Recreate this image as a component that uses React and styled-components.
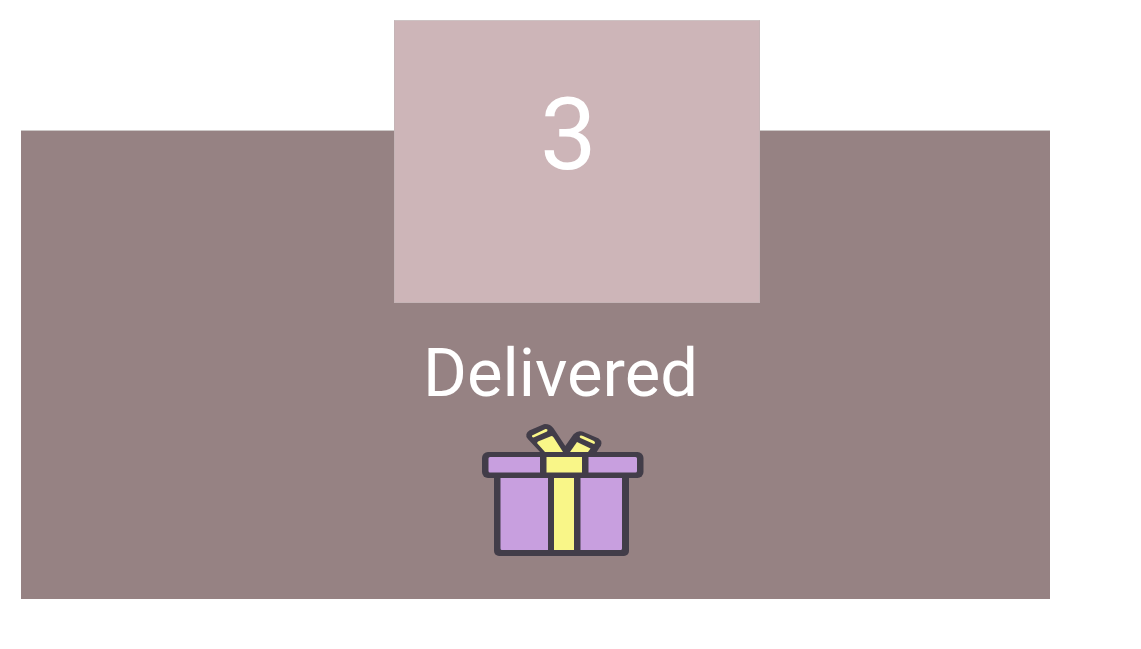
import React from "react";
import styled, { createGlobalStyle } from "styled-components";

const GlobalStyle = createGlobalStyle`
  body {
    margin: 0;
    background: #fff;
    font-family: Roboto, "Liberation Sans", sans-serif;
  }
`;

const Page = styled.main`
  box-sizing: border-box;
  padding: 20px 91px 50px 21px;
`;

const Panel = styled.section`
  box-sizing: border-box;
  display: flex;
  flex-direction: column;
  align-items: center;
  margin-top: 111px;
  padding: 0 0 40px 54px;
  background: #968283;
  box-shadow: 0 -1px 0 #cdc8c7;
  color: #fff;
`;

const Count = styled.div`
  box-sizing: border-box;
  display: flex;
  justify-content: center;
  width: 366px;
  height: 283px;
  margin: -111px 0 0 28px;
  padding: 54px 16px 0 0;
  border: 1px solid #c5b4b6;
  border-top-color: #cdc2c3;
  background: #cdb5b8;
  font-size: 101px;
  line-height: 120px;
`;

const Status = styled.h1`
  margin: 30px 0 0;
  padding-right: 4px;
  font-size: 67px;
  font-weight: 400;
  line-height: 80px;
`;

const Gift = styled.svg`
  display: block;
  width: 166px;
  height: 137px;
  margin-top: 9px;
`;

function GiftIcon() {
  return (
    <Gift viewBox="480 422 166 137" aria-hidden="true">
      <g fill="#423d49" stroke="#423d49" strokeWidth="6" strokeLinejoin="round">
        <path d="M531 433 L545 427 Q549 427 551 430 L565 451 L546 454 L530 437 Q528 435 531 433Z" />
        <path d="M564 453 L576 436 Q579 433 583 435 L597 441 Q600 443 597 446 L592 454Z" />
      </g>
      <g fill="#f9f688">
        <path d="M532 435.5 L545.5 429 Q548.5 428.8 547 431.5 L533.5 437.5 Q531.5 437.5 532 435.5Z" />
        <path d="M538 441.5 L551.5 436 Q553 436 554 438 L563 452 H545 L537 443Z" />
        <path d="M580 435.7 Q581.5 435.2 583 436 L594 441 Q596 443 594 444 L580.5 438 Q579 437 580 435.7Z" />
        <path d="M577 442 L590.5 448.5 L588 452 H570Z" />
      </g>
      <rect x="494" y="468" width="135" height="88" rx="5" fill="#423d49" />
      <rect x="482" y="452" width="161.5" height="26" rx="6" fill="#423d49" />
      <path fill="#c89fdf" d="M490 457H540V472.5H490Q488.500 472.500 488.500 471V458.500Q488.500 457 490 457ZM588.500 457H635.500Q637 457 637 458.500V471Q637 472.500 635.500 472.500H588.500ZM500.500 478H548V550H502Q500.500 550 500.500 548.500ZM580.500 478H622V548.500Q622 550 620.500 550H580.500Z" />
      <path fill="#f9f688" d="M546.500 457H582V472.500H546.500ZM554 478H574V550H554Z" />
    </Gift>
  );
}

export default function App() {
  return (
    <>
      <GlobalStyle />
      <Page>
        <Panel>
          <Count>3</Count>
          <Status>Delivered</Status>
          <GiftIcon />
        </Panel>
      </Page>
    </>
  );
}
